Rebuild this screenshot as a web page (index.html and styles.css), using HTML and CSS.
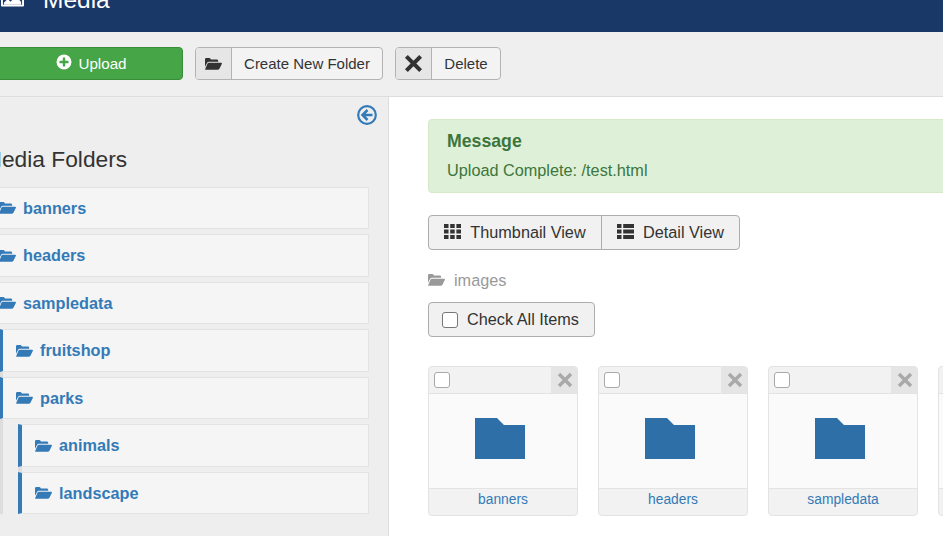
FILE: index.html
```html
<!DOCTYPE html>
<html lang="en">
<head>
    <meta charset="UTF-8">
    <meta name="viewport" content="width=device-width, initial-scale=1.0">
    <title>Media</title>
    <link rel="stylesheet" href="styles.css">
</head>
<body>
    <svg class="icon-defs" width="0" height="0">
        <symbol id="folder-open" viewBox="0 0 16 13">
            <path d="M0 2.2Q0 .8 1.2 .8H4Q4.8 .8 5.2 1.600L5.500 2.200H11Q12.400 2.200 12.400 3.400V4.400H3.600Q2.600 4.400 2 5.400L0 9.200Z"/>
            <path d="M3.400 5.300H15.200Q16.300 5.300 15.800 6.400L13.600 11Q13 12 12 12H.9Q-.2 12 .3 11L2.400 6Q2.800 5.300 3.400 5.300Z"/>
        </symbol>
        <symbol id="folder" viewBox="0 0 50 41">
            <path d="M0 0H22L29 7H50V41H0Z"/>
        </symbol>
        <symbol id="times" viewBox="0 0 16 16">
            <path d="M3.200 .8 8 5.600 12.800 .8 15.200 3.200 10.400 8 15.200 12.800 12.800 15.200 8 10.400 3.200 15.200 .8 12.800 5.600 8 .8 3.200Z"/>
        </symbol>
    </svg>

    <header class="page-header">
        <svg class="header-icon" viewBox="0 0 24 20"><path fill-rule="evenodd" d="M1 0H23Q24 0 24 1V19Q24 20 23 20H1Q0 20 0 19V1Q0 0 1 0ZM2 2V18H22V2Z"/><path d="M3 18V16L7 12 10 15 15 9 21 15V18Z"/></svg>
        <h1 class="page-title">Media</h1>
    </header>

    <div class="toolbar">
        <button class="btn-upload">
            <svg class="plus-icon" viewBox="0 0 16 16"><path fill-rule="evenodd" d="M8 .5A7.500 7.500 0 1 0 8 15.500 7.500 7.500 0 0 0 8 .5ZM6.800 3.500H9.200V6.800H12.500V9.200H9.200V12.500H6.800V9.200H3.500V6.800H6.800Z"/></svg>
            Upload
        </button>
        <button class="btn-split btn-create">
            <span class="btn-icon"><svg class="icon-folder-sm"><use href="#folder-open"/></svg></span>
            <span class="btn-label">Create New Folder</span>
        </button>
        <button class="btn-split btn-delete">
            <span class="btn-icon"><svg class="icon-times"><use href="#times"/></svg></span>
            <span class="btn-label">Delete</span>
        </button>
    </div>

    <div class="main">
        <aside class="sidebar">
            <div class="collapse-row">
                <svg class="collapse-icon" viewBox="0 0 20 20"><circle cx="10" cy="10" r="8.800" fill="none" stroke="#337ab7" stroke-width="2.200"/><path d="M10.500 5 5.500 10 10.500 15M5.500 10H15.500" fill="none" stroke="#337ab7" stroke-width="2.500"/></svg>
            </div>
            <h2 class="sidebar-title">Media Folders</h2>
            <ul class="folder-list level-1">
                <li class="folder-item"><svg class="icon-folder-sm"><use href="#folder-open"/></svg>banners</li>
                <li class="folder-item"><svg class="icon-folder-sm"><use href="#folder-open"/></svg>headers</li>
                <li class="folder-item"><svg class="icon-folder-sm"><use href="#folder-open"/></svg>sampledata</li>
            </ul>
            <ul class="folder-list level-2">
                <li class="folder-item"><svg class="icon-folder-sm"><use href="#folder-open"/></svg>fruitshop</li>
                <li class="folder-item"><svg class="icon-folder-sm"><use href="#folder-open"/></svg>parks</li>
            </ul>
            <ul class="folder-list level-3">
                <li class="folder-item"><svg class="icon-folder-sm"><use href="#folder-open"/></svg>animals</li>
                <li class="folder-item"><svg class="icon-folder-sm"><use href="#folder-open"/></svg>landscape</li>
            </ul>
        </aside>

        <section class="content">
            <div class="alert">
                <h4 class="alert-title">Message</h4>
                <div class="alert-text">Upload Complete: /test.html</div>
            </div>

            <div class="view-toggle">
                <button class="toggle-btn toggle-thumb">
                    <svg class="view-icon" viewBox="0 0 17 15"><path d="M0 0H4.500V4H0ZM6.200 0H10.700V4H6.200ZM12.400 0H17V4H12.400ZM0 5.500H4.500V9.500H0ZM6.200 5.500H10.700V9.500H6.200ZM12.400 5.500H17V9.500H12.400ZM0 11H4.500V15H0ZM6.200 11H10.700V15H6.200ZM12.400 11H17V15H12.400Z"/></svg>
                    Thumbnail View
                </button>
                <button class="toggle-btn toggle-detail">
                    <svg class="view-icon" viewBox="0 0 17 15"><path d="M0 0H4.500V4H0ZM6.200 0H17V4H6.200ZM0 5.500H4.500V9.500H0ZM6.200 5.500H17V9.500H6.200ZM0 11H4.500V15H0ZM6.200 11H17V15H6.200Z"/></svg>
                    Detail View
                </button>
            </div>

            <div class="breadcrumb"><svg class="icon-folder-sm"><use href="#folder-open"/></svg>images</div>

            <button class="check-all"><span class="checkbox"></span>Check All Items</button>

            <div class="cards">
                <div class="card">
                    <div class="card-top"><span class="checkbox"></span><span class="card-close"><svg class="icon-close"><use href="#times"/></svg></span></div>
                    <div class="card-body"><svg class="icon-folder-lg"><use href="#folder"/></svg></div>
                    <div class="card-name">banners</div>
                </div>
                <div class="card">
                    <div class="card-top"><span class="checkbox"></span><span class="card-close"><svg class="icon-close"><use href="#times"/></svg></span></div>
                    <div class="card-body"><svg class="icon-folder-lg"><use href="#folder"/></svg></div>
                    <div class="card-name">headers</div>
                </div>
                <div class="card">
                    <div class="card-top"><span class="checkbox"></span><span class="card-close"><svg class="icon-close"><use href="#times"/></svg></span></div>
                    <div class="card-body"><svg class="icon-folder-lg"><use href="#folder"/></svg></div>
                    <div class="card-name">sampledata</div>
                </div>
                <div class="card">
                    <div class="card-top"><span class="checkbox"></span></div>
                    <div class="card-body"></div>
                    <div class="card-name"></div>
                </div>
            </div>
        </section>
    </div>
</body>
</html>
```

FILE: styles.css
```css
html, body {
    height: 100%;
    overflow: hidden;
}

body {
    margin: 0;
    font-family: "Liberation Sans", Arial, sans-serif;
    font-size: 16.25px;
    color: #333;
    background-color: #fff;
}

button {
    font-family: inherit;
    font-size: 15px;
    color: #333;
    padding: 0;
    cursor: pointer;
}

ul {
    list-style: none;
    margin: 0;
    padding: 0;
}

.icon-defs {
    display: block;
    height: 0;
}

/* header, the page is scrolled so the title is cut off */
.page-header {
    display: flex;
    align-items: flex-end;
    height: 32px;
    background-color: #1a3867;
    color: #fff;
    overflow: hidden;
}

.header-icon {
    flex: none;
    width: 23px;
    height: 20px;
    margin: 0 18px 25.5px 1px;
    fill: #fff;
}

.page-title {
    margin: 0 0 17px 1px;
    font-size: 24.5px;
    font-weight: normal;
    line-height: 30px;
}

/* toolbar */
.toolbar {
    display: flex;
    height: 65px;
    box-sizing: border-box;
    padding-top: 15px;
    background-color: #efefef;
    border-bottom: 1px solid #ddd;
}

.toolbar button {
    height: 33px;
    box-sizing: border-box;
}

.btn-upload {
    display: flex;
    align-items: center;
    justify-content: center;
    gap: 6px;
    width: 195px;
    margin-left: -12px;
    margin-right: 12px;
    padding-left: 12px;
    font-size: 15.2px;
    color: #fff;
    background-color: #46a546;
    border: 1px solid #388e38;
    border-radius: 4px;
}

.plus-icon {
    width: 16px;
    height: 16px;
    margin-top: -3px;
    fill: #fff;
}

.btn-split {
    display: flex;
    align-items: stretch;
    padding: 0;
    background-color: #f3f3f3;
    border: 1px solid #b3b3b3;
    border-radius: 4px;
    overflow: hidden;
}

.btn-create {
    width: 188px;
    margin-right: 12px;
}

.btn-delete {
    width: 106px;
}

.btn-icon {
    display: flex;
    flex: none;
    align-items: center;
    justify-content: center;
    width: 35px;
    background-color: #e6e6e6;
    border-right: 1px solid #b3b3b3;
}

.btn-label {
    flex: 1;
    align-self: center;
    text-align: center;
}

.icon-folder-sm {
    flex: none;
    width: 17px;
    height: 14px;
    fill: currentColor;
}

.icon-times {
    width: 19px;
    height: 19px;
    fill: #333;
}

/* main area */
.main {
    display: flex;
    height: 439px;
}

.sidebar {
    flex: none;
    width: 389px;
    box-sizing: border-box;
    padding-right: 19px;
    background-color: #eee;
    border-right: 1px solid #ddd;
}

.collapse-row {
    display: flex;
    justify-content: flex-end;
    padding-top: 8px;
    margin-right: -8px;
}

.collapse-icon {
    width: 20px;
    height: 20px;
}

.sidebar-title {
    margin: 21px 0 14.75px -17px;
    font-size: 22.75px;
    font-weight: normal;
    line-height: 26px;
    white-space: nowrap;
}

.folder-item {
    display: flex;
    align-items: center;
    gap: 7px;
    height: 42.5px;
    box-sizing: border-box;
    margin-bottom: 5px;
    padding-top: 0.5px;
    color: #337ab7;
    font-weight: bold;
    background-color: #f5f5f5;
    border: 1px solid #e3e3e3;
}

.level-1 .folder-item {
    margin-left: -20px;
    padding-left: 18px;
}

/* the grey strip shows in the gaps between the nested rows */
.level-2 {
    background: linear-gradient(#ddd, #ddd) no-repeat 0 0 / 3px 100%;
}

.level-2 .folder-item {
    padding-left: 13px;
    border-left: 3px solid #337ab7;
}

.level-2 .folder-item:last-child {
    margin-bottom: 0;
}

.level-3 {
    padding: 5px 0 0 15px;
    border-left: 3px solid #ddd;
    background: linear-gradient(#ddd, #ddd) no-repeat content-box 0 0 / 4px 100%;
}

.level-3 .folder-item {
    padding-left: 13px;
    border-left: 4px solid #337ab7;
}

.level-3 .folder-item:last-child {
    margin-bottom: 0;
}

/* content */
.content {
    flex: 1;
    min-width: 0;
    padding: 22px 0 0 39px;
}

.alert {
    height: 74px;
    box-sizing: border-box;
    margin-right: -20px;
    padding: 11px 18px;
    color: #3c763d;
    background-color: #dff0d8;
    border: 1px solid #d6e9c6;
    border-radius: 4px;
}

.alert-title {
    margin: 0 0 9px;
    font-size: 17.7px;
    line-height: 20px;
}

.alert-text {
    line-height: 20px;
}

.view-toggle {
    display: flex;
    margin-top: 22px;
}

.toggle-btn {
    display: flex;
    align-items: center;
    justify-content: center;
    gap: 9px;
    height: 35px;
    font-size: 16.25px;
    background-color: #f1f1f1;
    border: 1px solid #adadad;
}

.toggle-thumb {
    width: 174px;
    border-radius: 4px 0 0 4px;
}

.toggle-detail {
    width: 139px;
    margin-left: -1px;
    border-radius: 0 4px 4px 0;
}

.view-icon {
    width: 17px;
    height: 15px;
    margin-top: -2px;
    fill: #333;
}

.breadcrumb {
    display: flex;
    align-items: center;
    gap: 9px;
    height: 20px;
    margin-top: 20px;
    color: #999;
}

.check-all {
    display: flex;
    align-items: center;
    gap: 9px;
    width: 167px;
    height: 35px;
    margin-top: 12px;
    padding-left: 13px;
    font-size: 16.25px;
    background-color: #f1f1f1;
    border: 1px solid #adadad;
    border-radius: 4px;
}

.checkbox {
    display: block;
    flex: none;
    width: 16px;
    height: 16px;
    box-sizing: border-box;
    background-color: #fff;
    border: 1px solid #767676;
    border-radius: 3px;
}

.cards {
    display: flex;
    gap: 20px;
    margin-top: 29px;
}

.card {
    flex: none;
    width: 150px;
    height: 150px;
    box-sizing: border-box;
    background-color: #f2f2f2;
    border: 1px solid #e3e3e3;
    border-radius: 4px;
    overflow: hidden;
}

.card-top {
    display: flex;
    align-items: center;
    justify-content: space-between;
    height: 26px;
    padding-left: 5px;
    border-bottom: 1px solid #e3e3e3;
}

.card-top .checkbox {
    border-color: #a9a9a9;
}

.card-close {
    display: flex;
    align-items: center;
    justify-content: center;
    width: 26px;
    height: 26px;
    background-color: #e5e5e5;
}

.icon-close {
    width: 16px;
    height: 16px;
    margin-left: 2px;
    fill: #a9a9a9;
}

.card-body {
    display: flex;
    justify-content: center;
    height: 95px;
    box-sizing: border-box;
    padding: 24px 6px 0 0;
    background-color: #fafafa;
    border-bottom: 1px solid #e3e3e3;
}

.icon-folder-lg {
    width: 50px;
    height: 41px;
    fill: #2f6fa8;
}

.card-name {
    padding-top: 2px;
    font-size: 13.8px;
    line-height: 17px;
    text-align: center;
    color: #337ab7;
}
```
